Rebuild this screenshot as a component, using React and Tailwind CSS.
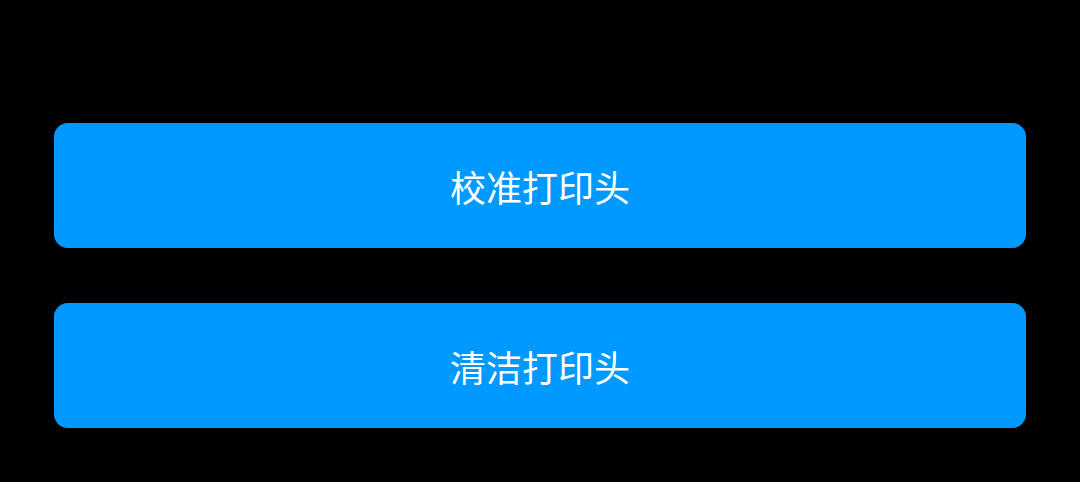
export default function App() {
  const font = { fontFamily: '"Noto Sans CJK SC", "Noto Sans", sans-serif' };
  return (
    <div className="w-[1080px] h-[482px] bg-black flex flex-col pt-[123px] px-[54px] gap-[55px]" style={font}>
      <button className="w-[972px] h-[125px] rounded-[14px] bg-[#0099ff] text-white text-[36px] flex items-center justify-center font-normal">
        校准打印头
      </button>
      <button className="w-[972px] h-[125px] rounded-[14px] bg-[#0099ff] text-white text-[36px] flex items-center justify-center font-normal">
        清洁打印头
      </button>
    </div>
  );
}
